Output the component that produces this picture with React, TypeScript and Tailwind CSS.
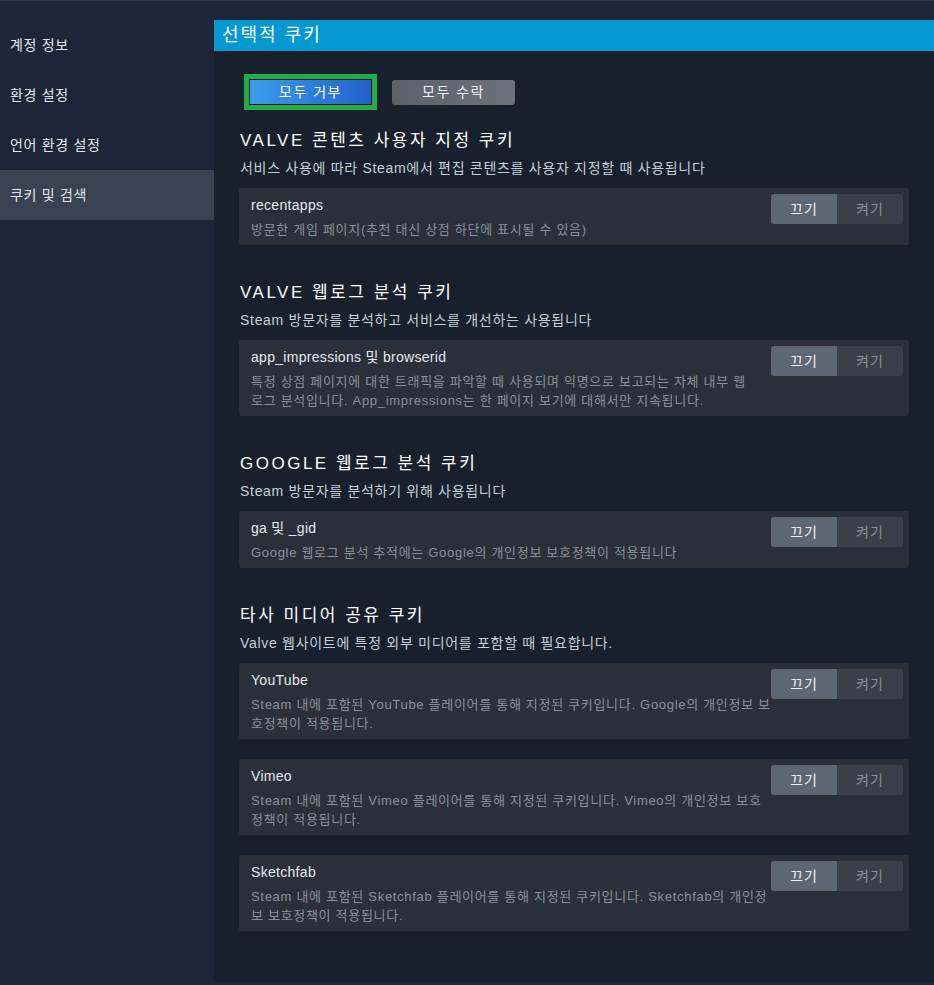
import React from "react";

type Item = { title: string; lines: string[] };
type Section = { heading: string; desc: string; items: Item[] };

const sections: Section[] = [
  {
    heading: "VALVE 콘텐츠 사용자 지정 쿠키",
    desc: "서비스 사용에 따라 Steam에서 편집 콘텐츠를 사용자 지정할 때 사용됩니다",
    items: [
      { title: "recentapps", lines: ["방문한 게임 페이지(추천 대신 상점 하단에 표시될 수 있음)"] },
    ],
  },
  {
    heading: "VALVE 웹로그 분석 쿠키",
    desc: "Steam 방문자를 분석하고 서비스를 개선하는 사용됩니다",
    items: [
      {
        title: "app_impressions 및 browserid",
        lines: [
          "특정 상점 페이지에 대한 트래픽을 파악할 때 사용되며 익명으로 보고되는 자체 내부 웹",
          "로그 분석입니다. App_impressions는 한 페이지 보기에 대해서만 지속됩니다.",
        ],
      },
    ],
  },
  {
    heading: "GOOGLE 웹로그 분석 쿠키",
    desc: "Steam 방문자를 분석하기 위해 사용됩니다",
    items: [
      { title: "ga 및 _gid", lines: ["Google 웹로그 분석 추적에는 Google의 개인정보 보호정책이 적용됩니다"] },
    ],
  },
  {
    heading: "타사 미디어 공유 쿠키",
    desc: "Valve 웹사이트에 특정 외부 미디어를 포함할 때 필요합니다.",
    items: [
      {
        title: "YouTube",
        lines: [
          "Steam 내에 포함된 YouTube 플레이어를 통해 지정된 쿠키입니다. Google의 개인정보 보",
          "호정책이 적용됩니다.",
        ],
      },
      {
        title: "Vimeo",
        lines: [
          "Steam 내에 포함된 Vimeo 플레이어를 통해 지정된 쿠키입니다. Vimeo의 개인정보 보호",
          "정책이 적용됩니다.",
        ],
      },
      {
        title: "Sketchfab",
        lines: [
          "Steam 내에 포함된 Sketchfab 플레이어를 통해 지정된 쿠키입니다. Sketchfab의 개인정",
          "보 보호정책이 적용됩니다.",
        ],
      },
    ],
  },
];

const navItems = ["계정 정보", "환경 설정", "언어 환경 설정", "쿠키 및 검색"];

function Toggle() {
  return (
    <div className="flex h-[30px] w-[132px] shrink-0 overflow-hidden rounded-[3px] text-[14px] tracking-[1px]">
      <div className="flex w-[66px] items-center justify-center bg-[#5d6774] text-[#eef1f4]">끄기</div>
      <div className="flex w-[66px] items-center justify-center bg-[#3b3f49] text-[#8c9098]">켜기</div>
    </div>
  );
}

function Card({ item }: { item: Item }) {
  return (
    <div className="flex rounded-[3px] bg-[#2a2f3a] pb-[6px]">
      <div className="min-w-0 flex-1 pl-3 pt-2">
        <div className="text-[14px] leading-[18px] tracking-[0.3px] text-[#e6e9ec]">{item.title}</div>
        <div className="mt-[6px] text-[13px] leading-[19px] tracking-[0.7px] text-[#8b9198]">
          {item.lines.map((l, i) => (
            <div key={i} className="whitespace-nowrap">{l}</div>
          ))}
        </div>
      </div>
      <div className="mr-1.5 mt-1.5 shrink-0">
        <Toggle />
      </div>
    </div>
  );
}

export default function App() {
  return (
    <div
      className="flex min-h-[985px] w-[934px] flex-col bg-[#1c2638]"
      style={{ fontFamily: '"Liberation Sans", "Noto Sans CJK KR", sans-serif' }}
    >
      <div className="h-[1px] bg-[#2b3a52]" />
      <div className="flex flex-1 pt-[19px] pb-[3px]">
        <nav className="w-[214px] shrink-0">
          {navItems.map((n, i) => (
            <div
              key={n}
              className={
                "flex h-[50px] items-center pl-[10px] text-[14px] tracking-[0.7px] text-[#e4e8ec] " +
                (i === 3 ? "bg-[#394250]" : "")
              }
            >
              {n}
            </div>
          ))}
        </nav>
        <main className="min-w-0 flex-1 bg-[#17202c]">
          <div className="flex h-[31px] items-center bg-[#0399d0] pl-[8px] text-[18px] tracking-[2px] text-white">
            선택적 쿠키
          </div>
          <div className="px-[25px] pt-[23px] pb-[46px]">
            <div className="flex items-center gap-[15px] pl-[5px]">
              <div className="border-[5px] border-[#22ad49]">
                <div className="border border-[#151622]">
                  <button className="flex h-[24px] w-[121px] items-center justify-center bg-gradient-to-r from-[#3c9dea] to-[#2460cc] text-[14px] tracking-[1.5px] text-white">
                    모두 거부
                  </button>
                </div>
              </div>
              <button className="flex h-[25px] w-[123px] items-center justify-center rounded-[3px] bg-gradient-to-r from-[#5c6068] to-[#6d717a] text-[14px] tracking-[1.5px] text-[#eef0f2]">
                모두 수락
              </button>
            </div>
            <div className="mt-[19px] flex flex-col gap-[36px]">
              {sections.map((s) => (
                <section key={s.heading}>
                  <h2 className="pl-px text-[17px] leading-[24px] tracking-[2.5px] text-white">{s.heading}</h2>
                  <p className="mt-[5px] pl-px text-[14px] leading-[20px] tracking-[0.7px] text-[#c6cfd8]">{s.desc}</p>
                  <div className="mt-[10px] flex flex-col gap-[20px]">
                    {s.items.map((it) => (
                      <Card key={it.title} item={it} />
                    ))}
                  </div>
                </section>
              ))}
            </div>
          </div>
        </main>
      </div>
    </div>
  );
}
